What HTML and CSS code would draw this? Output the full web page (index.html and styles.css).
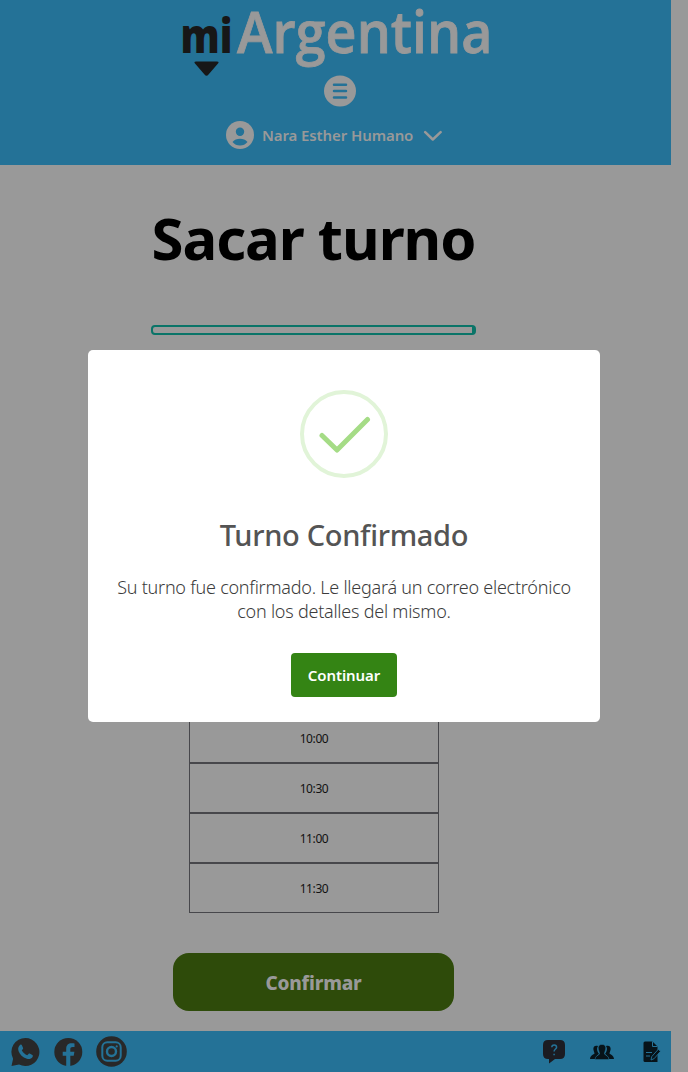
FILE: index.html
```html
<!DOCTYPE html>
<html lang="es">
<head>
<meta charset="utf-8">
<title>Mi Argentina - Sacar turno</title>
<link rel="stylesheet" href="styles.css">
</head>
<body>
<div class="page">
  <header class="header">
    <svg class="logo" width="312" height="78" viewBox="180 0 312 78" role="img" aria-label="mi Argentina">
      <text class="logo-mi" x="180.500" y="53" textLength="52" lengthAdjust="spacingAndGlyphs">mi</text>
      <text class="logo-name" x="237" y="53" textLength="255.500" lengthAdjust="spacingAndGlyphs">Argentina</text>
      <path d="M196 61.500h21q2.500 0 1 2l-9.500 11q-2 2.500-4 0l-9.500-11q-1.500-2 1-2z" fill="#171717"/>
    </svg>
    <svg class="menu" width="32" height="32" viewBox="0 0 32 32">
      <ellipse cx="16" cy="16" rx="16" ry="15.5" fill="#999"/>
      <path d="M10 9.7h12M10 16h12M10 22.4h12" stroke="#247297" stroke-width="2.5" stroke-linecap="round"/>
    </svg>
    <div class="user">
      <svg width="28" height="28" viewBox="0 0 28 28">
        <circle cx="14" cy="14" r="14" fill="#999"/>
        <circle cx="14" cy="10.8" r="4.2" fill="#247297"/>
        <path d="M6.5 21c2-2.3 4.400-3.300 7.500-3.300s5.500 1 7.500 3.300c-2 2.400-4.400 3.500-7.500 3.500S8.500 23.400 6.500 21z" fill="#247297"/>
      </svg>
      <span class="user-name">Nara Esther Humano</span>
      <svg width="20" height="12" viewBox="0 0 20 12"><path d="M2.200 3.200l7.600 7.300 7.800-7.300" fill="none" stroke="#999" stroke-width="2.500" stroke-linecap="round" stroke-linejoin="round"/></svg>
    </div>
  </header>

  <main class="main">
    <h1 class="title">Sacar turno</h1>
    <div class="progress"></div>
    <div class="slots">
      <div class="slot">10:00</div>
      <div class="slot">10:30</div>
      <div class="slot">11:00</div>
      <div class="slot">11:30</div>
    </div>
    <button class="confirm">Confirmar</button>
  </main>

  <footer class="footer">
    <div class="social">
      <svg width="30" height="30" viewBox="0 0 30 30">
        <path d="M15.500 1a14 14 0 1 1-6.400 26.500L1.500 29l1.600-7.300A14 14 0 0 1 15.500 1z" fill="#282828"/>
        <path d="M10.300 7.800c.6-.5 1.300-.3 1.600.4l1.200 2.700c.2.600-.1 1-1.300 2.300 1.300 2.500 3.100 4 5.500 5 1.400-1.700 1.700-2 2.400-1.700l2.700 1.400c.6.300.5 1.500 0 2.300-1.100 1.600-3.400 2.300-5.500 1.500-4.500-1.500-7-4.300-8.400-7.800-.8-2.300-.1-4.800 1.800-6.100z" fill="#247297"/>
      </svg>
      <svg width="30" height="30" viewBox="0 0 30 30">
        <circle cx="15.300" cy="15" r="14" fill="#282828"/>
        <path d="M13.200 29.200V18.700H9.700v-4h3.500v-3c0-3.700 2.200-5.500 5.300-5.500 1.300 0 2.300.1 3 .3V10h-1.800c-1.800 0-2.400.8-2.400 2.300v2.400h4.100l-.7 4h-3.400v10.500z" fill="#247297"/>
      </svg>
      <svg width="31" height="31" viewBox="0 0 31 31">
        <circle cx="15.500" cy="15.500" r="15.300" fill="#282828"/>
        <rect x="6.300" y="6.300" width="18.400" height="18.400" rx="5" fill="none" stroke="#247297" stroke-width="2"/>
        <circle cx="15.500" cy="15.500" r="4.500" fill="none" stroke="#247297" stroke-width="2.400"/>
        <circle cx="20.700" cy="10.400" r="1.100" fill="#247297"/>
      </svg>
    </div>
    <div class="links">
      <svg width="22" height="24" viewBox="0 0 22 24">
        <path d="M5 0h12q5 0 5 5v9q0 5-5 5h-5l-6 4.500V19H5q-5 0-5-5V5q0-5 5-5z" fill="#1b1c22"/>
        <path d="M8.800 7.200c0-3 4.800-3 4.800 0 0 1.700-2.500 2-2.500 4.300M11.100 13.800v1.500" fill="none" stroke="#247297" stroke-width="1.500"/>
      </svg>
      <svg class="people" width="24" height="16" viewBox="0 0 24 16">
        <path d="M8 2c-3-1-5 .6-4.600 3.400.3 2 1.100 3 1.100 4C3.500 10.700.2 11 0 15h5c.5-2.300 2.600-4 4-4.900C7 7.500 6.300 4.400 8 2zM16 2c3-1 5 .6 4.600 3.400-.3 2-1.100 3-1.100 4 1 1.300 4.300 1.600 4.500 5.600h-5c-.5-2.300-2.600-4-4-4.900 2-2.600 2.700-5.700 1-8.100z" fill="#071319"/>
        <path d="M12 .4c2.900 0 4.200 2 3.700 4.700-.3 2-1.300 3.200-1.300 4.800 1.200 1.500 4.300 1.800 4.600 5.600H5c.3-3.800 3.400-4.100 4.600-5.600 0-1.600-1-2.800-1.300-4.800C7.800 2.400 9.100.4 12 .4z" fill="#071319" stroke="#247297" stroke-width=".5"/>
      </svg>
      <svg width="18" height="22" viewBox="0 0 18 22">
        <path d="M2 .5h7.500l5 5V21H2Q.5 21 .5 19.500V2Q.5.500 2 .5z" fill="#071319"/>
        <path d="M9.500.5v5h5M3 11.500h6M3 15h4" fill="none" stroke="#247297" stroke-width="1"/>
        <path d="M8 19l.8-3.500 6.500-7.200 2.200 2-6.300 7.300z" fill="#071319" stroke="#247297" stroke-width=".9"/>
      </svg>
    </div>
  </footer>
</div>

<div class="modal" role="dialog">
  <svg class="check" width="88" height="88" viewBox="0 0 88 88">
    <circle cx="44" cy="44" r="42" fill="none" stroke="#e1f4d8" stroke-width="4"/>
    <path d="M22 45.500l15 14.500L67.500 29.500" fill="none" stroke="#a5dc86" stroke-width="5" stroke-linecap="round" stroke-linejoin="round"/>
  </svg>
  <h2 class="modal-title">Turno Confirmado</h2>
  <p class="modal-text">Su turno fue confirmado. Le llegará un correo electrónico<br>con los detalles del mismo.</p>
  <button class="continue">Continuar</button>
</div>
</body>
</html>
```
FILE: styles.css
```css
* { box-sizing: border-box; }
body {
  margin: 0;
  background: #999;
  font-family: "Noto Sans", "Open Sans", sans-serif;
}
svg { display: block; flex: none; }
button { border: 0; padding: 0; font-family: inherit; }
.page {
  width: 671px;
  height: 1072px;
  display: flex;
  flex-direction: column;
}
.header {
  height: 165px;
  flex: none;
  background: #247297;
  display: flex;
  flex-direction: column;
  align-items: center;
}
.logo { margin-left: 1px; overflow: visible; }
.logo-mi { font: 800 48px "Open Sans", sans-serif; fill: #171717; }
.logo-name {
  font: 600 58px "Open Sans", sans-serif;
  fill: #999;
  stroke: #999;
  stroke-width: .8px;
}
.menu { margin-top: -3px; margin-left: 9px; }
.user {
  display: flex;
  align-items: center;
  gap: 8px;
  height: 28px;
  margin-top: 14px;
  margin-right: 2px;
  color: #999;
}
.user-name {
  width: 153px;
  white-space: nowrap;
  font-size: 15px;
  font-weight: 600;
  line-height: 28px;
  letter-spacing: -.1px;
}
.main {
  flex: 1;
  padding-right: 44px;
  display: flex;
  flex-direction: column;
  align-items: center;
}
.title {
  margin: 33px 0 0;
  font-size: 58px;
  font-weight: 700;
  line-height: 80px;
  letter-spacing: -1px;
  white-space: nowrap;
  color: #000;
}
.progress {
  width: 325px;
  height: 10px;
  margin-top: 47px;
  border: 2px solid #0a7468;
  border-right-width: 4px;
  border-radius: 4px;
}
.slots {
  width: 250px;
  margin: 378px 0 0 1px;
}
.slot {
  height: 50px;
  border: 1px solid #47474b;
  font-size: 12px;
  line-height: 49px;
  text-align: center;
  letter-spacing: -.4px;
  color: #111;
}
.confirm {
  width: 281px;
  height: 58px;
  margin-top: 40px;
  padding-top: 1px;
  border-radius: 16px;
  background: #2e4b0a;
  color: #999;
  font-size: 19px;
  font-weight: 800;
  line-height: 58px;
  letter-spacing: -.2px;
}
.footer {
  height: 41px;
  flex: none;
  padding: 0 10px;
  background: #247297;
  display: flex;
  align-items: center;
  justify-content: space-between;
}
.social { display: flex; align-items: center; gap: 13px; }
.links { display: flex; align-items: center; gap: 25px; }
.links .people { margin-right: 4px; }
.modal {
  position: fixed;
  left: 88px;
  top: 350px;
  width: 512px;
  height: 372px;
  padding-top: 40px;
  border-radius: 5px;
  background: #fff;
  display: flex;
  flex-direction: column;
  align-items: center;
}
.modal-title {
  margin: 37px 0 0;
  font-size: 29px;
  font-weight: 500;
  line-height: 40px;
  letter-spacing: -.3px;
  color: #545454;
  white-space: nowrap;
}
.modal-text {
  margin: 20px 0 0;
  font-size: 18px;
  font-weight: 300;
  line-height: 24px;
  letter-spacing: -.24px;
  text-align: center;
  white-space: nowrap;
  color: #3c3c3c;
}
.continue {
  width: 106px;
  height: 44px;
  margin-top: 30px;
  border-radius: 4px;
  background: #348414;
  color: #fff;
  font-size: 15px;
  font-weight: 600;
  line-height: 44px;
  letter-spacing: -.1px;
}
```
